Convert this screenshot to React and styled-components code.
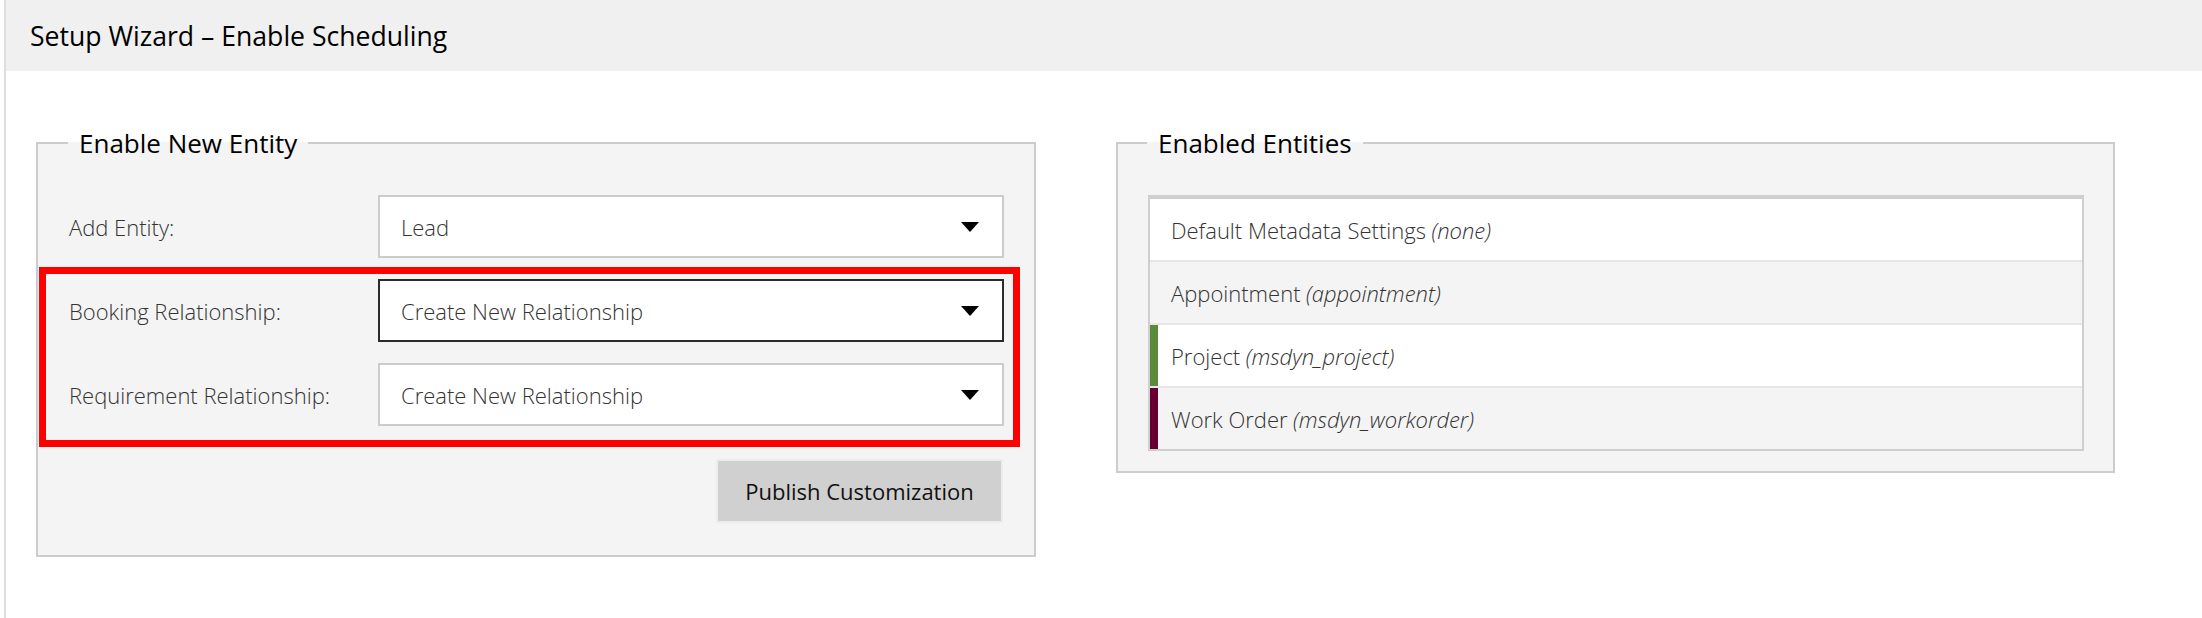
import React from 'react';
import styled, { createGlobalStyle } from 'styled-components';

const GlobalStyle = createGlobalStyle`
  body {
    margin: 0;
    background: #fff;
    font-family: "Open Sans", "Noto Sans", sans-serif;
  }
`;

const Page = styled.div`
  margin-left: 4px;
  border-left: 2px solid #dedede;
  min-height: 100vh;
  box-sizing: border-box;
`;

const Header = styled.header`
  height: 71px;
  background: #f0f0f0;
  display: flex;
  align-items: center;
  padding-left: 24px;
`;

const Title = styled.h1`
  margin: 0;
  font-size: 26.6px;
  font-weight: 400;
  color: #000;
`;

const Content = styled.main`
  display: flex;
  align-items: flex-start;
  gap: 80px;
  padding: 54px 0 0 30px;
`;

const Panel = styled.fieldset`
  width: ${p => p.$width}px;
  min-width: 0;
  box-sizing: border-box;
  margin: 0;
  border: 2px solid #cccccc;
  background: #f4f4f4;
  padding: ${p => p.$pad};
`;

const Legend = styled.legend`
  margin-left: -1px;
  padding: 0 11px;
  font-size: 26px;
  line-height: 36px;
  color: #000;
`;

const Form = styled.div`
  display: flex;
  flex-direction: column;
  gap: 21px;
`;

const Row = styled.div`
  display: grid;
  grid-template-columns: 309px 626px;
  align-items: center;
`;

const Label = styled.span`
  font-size: 22px;
  font-weight: 300;
  color: #333;
`;

const SelectBox = styled.div`
  height: 63px;
  box-sizing: border-box;
  border: 2px solid ${p => (p.$active ? '#2b2b2b' : '#cccccc')};
  background: #fff;
  display: flex;
  align-items: center;
  justify-content: space-between;
  padding: 0 23px 0 21px;
  font-size: 22px;
  font-weight: 300;
  color: #333;
`;

const Highlight = styled.div`
  position: relative;
  display: flex;
  flex-direction: column;
  gap: 21px;

  &::after {
    content: '';
    position: absolute;
    top: -12px;
    left: -30px;
    right: -16px;
    bottom: -21px;
    border: 7px solid #ff0000;
    pointer-events: none;
  }
`;

const Actions = styled.div`
  display: flex;
  justify-content: flex-end;
  margin: 14px 3px 0 0;
`;

const Button = styled.button`
  width: 283px;
  height: 60px;
  border: none;
  background: #d1d0d0;
  box-shadow: 0 0 0 2px #ececec;
  font-family: inherit;
  font-size: 22px;
  font-weight: 400;
  color: #111;
  cursor: pointer;
`;

const List = styled.div`
  display: flex;
  flex-direction: column;
  gap: 2px;
  border: 2px solid #cfcfcf;
  border-top-width: 4px;
  background: #e6e6e6;
`;

const EntityRow = styled.div`
  height: 61px;
  display: flex;
  align-items: center;
  padding-left: 13px;
  border-left: 8px solid ${p => p.$accent || 'transparent'};
  background: ${p => (p.$alt ? '#f4f4f4' : '#fff')};
  font-size: 22px;
  font-weight: 300;
  color: #333;

  em {
    font-style: italic;
    margin-left: 0.25em;
  }
`;

const Caret = () => (
  <svg width="18" height="10" viewBox="0 0 18 10">
    <polygon points="0,0 18,0 9,10" fill="#000" />
  </svg>
);

const Select = ({ value, active }) => (
  <SelectBox $active={active}>
    <span>{value}</span>
    <Caret />
  </SelectBox>
);

const entities = [
  { name: 'Default Metadata Settings', key: 'none' },
  { name: 'Appointment', key: 'appointment', alt: true },
  { name: 'Project', key: 'msdyn_project', accent: '#5a8a3a' },
  { name: 'Work Order', key: 'msdyn_workorder', accent: '#660033', alt: true },
];

export default function App() {
  return (
    <>
      <GlobalStyle />
      <Page>
        <Header>
          <Title>Setup Wizard – Enable Scheduling</Title>
        </Header>
        <Content>
          <Panel $width={1000} $pad="34px 30px 34px 31px">
            <Legend>Enable New Entity</Legend>
            <Form>
              <Row>
                <Label>Add Entity:</Label>
                <Select value="Lead" />
              </Row>
              <Highlight>
                <Row>
                  <Label>Booking Relationship:</Label>
                  <Select value="Create New Relationship" active />
                </Row>
                <Row>
                  <Label>Requirement Relationship:</Label>
                  <Select value="Create New Relationship" />
                </Row>
              </Highlight>
              <Actions>
                <Button>Publish Customization</Button>
              </Actions>
            </Form>
          </Panel>
          <Panel $width={999} $pad="34px 29px 20px 30px">
            <Legend>Enabled Entities</Legend>
            <List>
              {entities.map(e => (
                <EntityRow key={e.key} $accent={e.accent} $alt={e.alt}>
                  {e.name}
                  <em>({e.key})</em>
                </EntityRow>
              ))}
            </List>
          </Panel>
        </Content>
      </Page>
    </>
  );
}
